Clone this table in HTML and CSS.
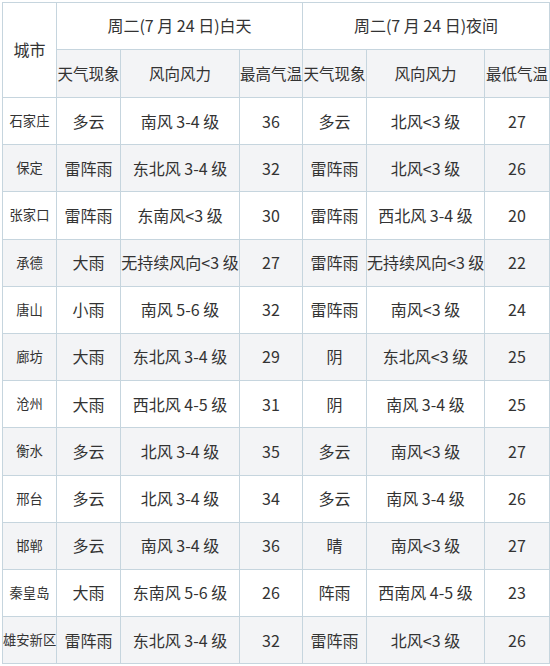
FILE: index.html
```html
<!DOCTYPE html>
<html lang="zh">
<head>
<meta charset="utf-8">
<title>天气预报</title>
<link rel="stylesheet" href="styles.css">
</head>
<body>
<table class="wx">
  <colgroup>
    <col class="c-city"><col class="c-w"><col class="c-wind"><col class="c-t">
    <col class="c-w2"><col class="c-wind2"><col class="c-t2">
  </colgroup>
  <thead>
    <tr class="h1">
      <th rowspan="2" class="city-h">城市</th>
      <th colspan="3">周二(7 月 24 日)白天</th>
      <th colspan="3">周二(7 月 24 日)夜间</th>
    </tr>
    <tr class="h2">
      <th>天气现象</th><th>风向风力</th><th>最高气温</th>
      <th>天气现象</th><th>风向风力</th><th>最低气温</th>
    </tr>
  </thead>
  <tbody>
    <tr><td class="city">石家庄</td><td>多云</td><td>南风 3-4 级</td><td>36</td><td>多云</td><td>北风&lt;3 级</td><td>27</td></tr>
    <tr><td class="city">保定</td><td>雷阵雨</td><td>东北风 3-4 级</td><td>32</td><td>雷阵雨</td><td>北风&lt;3 级</td><td>26</td></tr>
    <tr><td class="city">张家口</td><td>雷阵雨</td><td>东南风&lt;3 级</td><td>30</td><td>雷阵雨</td><td>西北风 3-4 级</td><td>20</td></tr>
    <tr><td class="city">承德</td><td>大雨</td><td>无持续风向&lt;3 级</td><td>27</td><td>雷阵雨</td><td>无持续风向&lt;3 级</td><td>22</td></tr>
    <tr><td class="city">唐山</td><td>小雨</td><td>南风 5-6 级</td><td>32</td><td>雷阵雨</td><td>南风&lt;3 级</td><td>24</td></tr>
    <tr><td class="city">廊坊</td><td>大雨</td><td>东北风 3-4 级</td><td>29</td><td>阴</td><td>东北风&lt;3 级</td><td>25</td></tr>
    <tr><td class="city">沧州</td><td>大雨</td><td>西北风 4-5 级</td><td>31</td><td>阴</td><td>南风 3-4 级</td><td>25</td></tr>
    <tr><td class="city">衡水</td><td>多云</td><td>北风 3-4 级</td><td>35</td><td>多云</td><td>南风&lt;3 级</td><td>27</td></tr>
    <tr><td class="city">邢台</td><td>多云</td><td>北风 3-4 级</td><td>34</td><td>多云</td><td>南风 3-4 级</td><td>26</td></tr>
    <tr><td class="city">邯郸</td><td>多云</td><td>南风 3-4 级</td><td>36</td><td>晴</td><td>南风&lt;3 级</td><td>27</td></tr>
    <tr><td class="city">秦皇岛</td><td>大雨</td><td>东南风 5-6 级</td><td>26</td><td>阵雨</td><td>西南风 4-5 级</td><td>23</td></tr>
    <tr><td class="city">雄安新区</td><td>雷阵雨</td><td>东北风 3-4 级</td><td>32</td><td>雷阵雨</td><td>北风&lt;3 级</td><td>26</td></tr>
  </tbody>
</table>
</body>
</html>
```

FILE: styles.css
```css
html, body {
  margin: 0;
  padding: 0;
  background: #ffffff;
}

body {
  padding: 2px 0 0 2px;
  font-family: "Noto Sans CJK SC", "Noto Sans", sans-serif;
  color: #333333;
}

.wx {
  border-collapse: collapse;
  table-layout: fixed;
  width: 547px;
  border: 1px solid #c6d5de;
}

.c-city { width: 54px; }
.c-w { width: 64px; }
.c-wind { width: 119px; }
.c-t { width: 63px; }
.c-w2 { width: 64px; }
.c-wind2 { width: 118px; }
.c-t2 { width: 65px; }

.wx th,
.wx td {
  border: 1px solid #c6d5de;
  padding: 0;
  text-align: center;
  vertical-align: middle;
  font-size: 16px;
  font-weight: normal;
  white-space: nowrap;
  overflow: visible;
  line-height: 1.2;
}

.wx .h1 th {
  height: 46px;
  background: #ffffff;
  font-size: 16px;
}

.wx .h2 th {
  height: 47px;
  background: #f3f4f6;
  font-size: 15.5px;
}

.wx .city-h {
  font-size: 16px;
}

.wx tbody tr {
  height: 47.2px;
}

.wx tbody tr:nth-child(even) td {
  background: #f3f4f6;
}

.wx td.city {
  font-size: 13.3px;
}
```
